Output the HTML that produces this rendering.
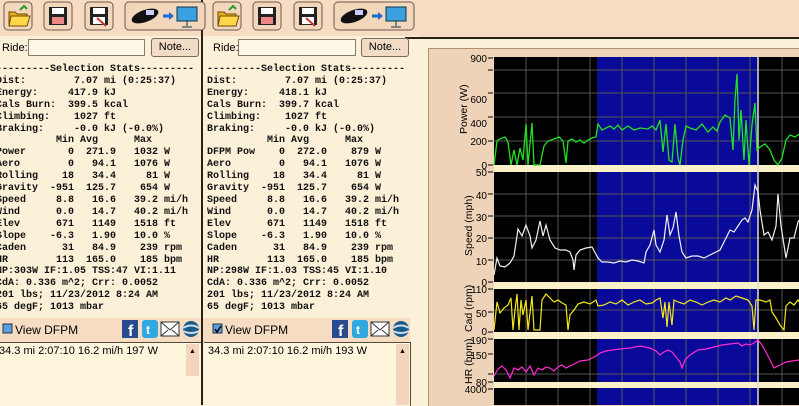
<!DOCTYPE html>
<html><head><meta charset="utf-8"><style>
body{margin:0;width:799px;height:405px;overflow:hidden;background:#fbf1d8;position:relative;font-family:"Liberation Sans",sans-serif}
.abs{position:absolute}
.tb{background:#f6dcc3}
.mono{font-family:"Liberation Mono",monospace;font-weight:bold;font-size:10px;line-height:11.9px;white-space:pre;color:#111}
.lbl{font-size:11px;color:#000}
</style></head><body>

<div class="abs tb" style="left:0;top:0;width:420px;height:36px"></div>
<div class="abs tb" style="left:420px;top:0;width:379px;height:37px"></div>
<div class="abs" style="left:405px;top:37px;width:394px;height:2px;background:#2a2018"></div>
<div class="abs" style="left:201px;top:0;width:2px;height:405px;background:#2a2018"></div>

<svg class="abs" style="left:0;top:0" width="420" height="36">
<g id="tb1">
 <rect x="4" y="2" width="28" height="28" rx="4" fill="#f3d7bc" stroke="#6d5a4a"/>
 <path d="M9 12h6l2 2h10v12H9z" fill="#e8b020" stroke="#6b4a00"/><path d="M11 16h19l-3 10H9z" fill="#ffd84a" stroke="#6b4a00"/><path d="M20 10l4-4 3 3" stroke="#2a9a2a" stroke-width="2" fill="none"/>
 <rect x="44" y="2" width="28" height="28" rx="4" fill="#f3d7bc" stroke="#6d5a4a"/>
 <rect x="49" y="7" width="18" height="18" fill="#222"/><rect x="52" y="8" width="12" height="6" fill="#fff"/><rect x="52" y="17" width="12" height="7" fill="#e88"/>
 <rect x="85" y="2" width="28" height="28" rx="4" fill="#f3d7bc" stroke="#6d5a4a"/>
 <rect x="90" y="7" width="18" height="18" fill="#222"/><rect x="93" y="8" width="12" height="6" fill="#fff"/><rect x="93" y="17" width="12" height="7" fill="#fff"/><path d="M97 18l9 8" stroke="#c33" stroke-width="2"/>
 <rect x="125" y="2" width="80" height="28" rx="4" fill="#f3d7bc" stroke="#6d5a4a"/>
 <ellipse cx="145" cy="16" rx="14" ry="6" fill="#111" transform="rotate(-20 145 16)"/><rect x="146" y="10" width="8" height="5" fill="#ccf"/>
 <path d="M163 16h7" stroke="#1a6ad0" stroke-width="3"/><path d="M169 12l5 4-5 4z" fill="#1a6ad0"/>
 <rect x="177" y="7" width="20" height="14" fill="#3aa0e0" stroke="#134"/><path d="M187 21v5M182 27h10" stroke="#134"/>
</g>
<use href="#tb1" x="209"/>
</svg>

<div class="abs lbl" style="left:2px;top:42px">Ride:</div>
<div class="abs" style="left:28px;top:39px;width:117px;height:17px;background:#fdf8e8;border:1px solid #8a7a6a;box-sizing:border-box"></div>
<div class="abs lbl" style="left:151px;top:38px;width:48px;height:19px;border:1px solid #7a6a5a;border-radius:3px;background:#f3dcc6;box-sizing:border-box;text-align:center;line-height:17px">Note...</div>
<div class="abs lbl" style="left:213px;top:42px">Ride:</div>
<div class="abs" style="left:238px;top:39px;width:118px;height:17px;background:#fdf8e8;border:1px solid #8a7a6a;box-sizing:border-box"></div>
<div class="abs lbl" style="left:361px;top:38px;width:48px;height:19px;border:1px solid #7a6a5a;border-radius:3px;background:#f3dcc6;box-sizing:border-box;text-align:center;line-height:17px">Note...</div>

<div class="abs mono" style="left:-4px;top:64px">---------Selection Stats---------
Dist:        7.07 mi (0:25:37)
Energy:     417.9 kJ
Cals Burn:  399.5 kcal
Climbing:    1027 ft
Braking:     -0.0 kJ (-0.0%)
          Min Avg      Max
Power       0  271.9   1032 W
Aero        0   94.1   1076 W
Rolling    18   34.4     81 W
Gravity  -951  125.7    654 W
Speed     8.8   16.6   39.2 mi/h
Wind      0.0   14.7   40.2 mi/h
Elev      671   1149   1518 ft
Slope    -6.3   1.90   10.0 %
Caden      31   84.9    239 rpm
HR        113  165.0    185 bpm
NP:303W IF:1.05 TSS:47 VI:1.11
CdA: 0.336 m^2; Crr: 0.0052
201 lbs; 11/23/2012 8:24 AM
65 degF; 1013 mbar</div>
<div class="abs mono" style="left:207px;top:64px">---------Selection Stats---------
Dist:        7.07 mi (0:25:37)
Energy:     418.1 kJ
Cals Burn:  399.7 kcal
Climbing:    1027 ft
Braking:     -0.0 kJ (-0.0%)
          Min Avg      Max
DFPM Pow    0  272.0    879 W
Aero        0   94.1   1076 W
Rolling    18   34.4     81 W
Gravity  -951  125.7    654 W
Speed     8.8   16.6   39.2 mi/h
Wind      0.0   14.7   40.2 mi/h
Elev      671   1149   1518 ft
Slope    -6.3   1.90   10.0 %
Caden      31   84.9    239 rpm
HR        113  165.0    185 bpm
NP:298W IF:1.03 TSS:45 VI:1.10
CdA: 0.336 m^2; Crr: 0.0052
201 lbs; 11/23/2012 8:24 AM
65 degF; 1013 mbar</div>

<div class="abs tb" style="left:0;top:318px;width:201px;height:24px"></div>
<div class="abs tb" style="left:203px;top:318px;width:207px;height:24px"></div>
<svg class="abs" style="left:0;top:318px" width="410" height="24">
<g id="soc">
 <rect x="3" y="6" width="9" height="9" fill="#5aa0e0" stroke="#234"/>
 <rect x="122" y="2" width="16" height="18" fill="#2a4a90"/><text x="128" y="18" font-family="Liberation Sans" font-weight="bold" font-size="16" fill="#fff">f</text>
 <rect x="142" y="2" width="16" height="18" rx="3" fill="#30a8e0"/><text x="146" y="16" font-family="Liberation Sans" font-weight="bold" font-size="12" fill="#fff">t</text>
 <rect x="161" y="4" width="18" height="14" fill="#fff" stroke="#333"/><path d="M161 4l9 8 9-8M161 18l7-6M179 18l-7-6" stroke="#333" fill="none"/>
 <circle cx="191" cy="11" r="8" fill="#1a5a8a"/><path d="M183 10q8-5 16 0M183 13q8 4 16 0" stroke="#cde" stroke-width="2" fill="none"/>
</g>
<use href="#soc" x="210"/>
<path d="M215 11l2 3 4-6" stroke="#000" stroke-width="1.5" fill="none"/>
</svg>
<div class="abs lbl" style="left:15px;top:323px;font-size:12px">View DFPM</div>
<div class="abs lbl" style="left:225px;top:323px;font-size:12px">View DFPM</div>

<div class="abs" style="left:0;top:342px;width:201px;height:63px;background:#fdf5dc;border-top:1px solid #5a4a3a"></div>
<div class="abs" style="left:204px;top:342px;width:206px;height:63px;background:#fdf5dc;border-top:1px solid #5a4a3a;border-right:1px solid #5a4a3a"></div>
<div class="abs" style="left:186px;top:344px;width:13px;height:32px;background:#f3d4bc"></div>
<div class="abs" style="left:396px;top:344px;width:13px;height:61px;background:#f3d4bc"></div>
<div class="abs lbl" style="left:-1px;top:345px">34.3 mi 2:07:10 16.2 mi/h 197 W</div>
<div class="abs lbl" style="left:208px;top:345px">34.3 mi 2:07:10 16.2 mi/h 193 W</div>
<div class="abs" style="left:189px;top:348px;font-size:7px">▲</div>
<div class="abs" style="left:399px;top:348px;font-size:7px">▲</div>

<div class="abs" style="left:428px;top:48px;width:371px;height:357px;background:#efd3b8;border-left:1px solid #b09070;border-top:1px solid #b09070"></div>
<svg class="abs" style="left:420px;top:0" width="379" height="405" font-family="Liberation Sans" font-size="11">
<rect x="74" y="57" width="305" height="348" fill="#fbf1c8"/>
<rect x="74" y="57" width="305" height="108" fill="#000"/>
<rect x="74" y="172" width="305" height="110" fill="#000"/>
<rect x="74" y="289" width="305" height="43" fill="#000"/>
<rect x="74" y="339" width="305" height="43" fill="#000"/>
<rect x="74" y="388" width="305" height="17" fill="#000"/>
<g fill="#0a0a9a">
 <rect x="177" y="57" width="161" height="108"/><rect x="177" y="172" width="161" height="110"/>
 <rect x="177" y="289" width="161" height="43"/><rect x="177" y="339" width="161" height="43"/><rect x="177" y="388" width="161" height="17"/>
</g>
<clipPath id="c"><rect x="74" y="57" width="305" height="108"/><rect x="74" y="172" width="305" height="110"/><rect x="74" y="289" width="305" height="43"/><rect x="74" y="339" width="305" height="43"/><rect x="74" y="388" width="305" height="17"/></clipPath>
<g clip-path="url(#c)" stroke="#555">
 <path d="M106 0v405M138 0v405M170 0v405M202 0v405M234 0v405M266 0v405M298 0v405M330 0v405M362 0v405"/>
 <path d="M74 70h305M74 93h305M74 117h305M74 141h305M74 194h305M74 216h305M74 238h305M74 260h305M74 310h305M74 374h305"/>
</g>
<path d="M338 57v348" stroke="#ddd" stroke-width="1.5"/>
<polyline fill="none" stroke="#22e022" stroke-width="1.3" points="74,165 77,141 80,139 85,137 88,142 91,165 94,150 97,165 100,148 103,160 106,124 108,165 112,123 114,165 120,165 124,146 128,141 134,139 139,137 143,141 146,163 148,141 152,139 156,142 160,140 164,143 168,140 172,138 176,137 178,124 182,130 186,128 190,126 194,129 198,125 202,130 208,126 214,130 220,128 228,129 232,126 236,130 240,120 243,152 246,124 249,160 252,162 255,124 258,158 260,165 263,140 266,126 270,128 276,130 282,124 288,132 293,127 297,131 300,122 305,115 310,118 313,150 315,100 317,74 319,140 321,110 324,160 326,120 329,165 332,125 335,103 337,150 340,147 345,144 350,150 354,160 358,165 362,158 366,140 370,135 375,137 379,134"/>
<polyline fill="none" stroke="#f0f0f0" stroke-width="1.2" points="74,275 77,258 80,266 85,267 90,263 94,256 98,229 102,236 106,225 110,236 112,248 116,240 120,221 123,236 126,225 130,240 135,248 140,250 146,250 150,252 153,260 154,270 156,255 160,250 166,248 172,247 178,258 182,262 188,262 194,263 200,261 206,262 212,260 218,261 224,263 226,252 230,245 234,230 236,245 240,252 244,240 247,215 250,235 253,228 256,212 259,236 262,252 266,258 272,256 278,256 284,258 290,255 296,252 300,250 306,238 310,230 314,232 318,226 322,220 325,218 328,222 332,210 335,185 338,192 340,210 344,235 348,232 352,240 356,226 358,194 361,226 364,245 366,258 370,238 374,238 378,222 379,220"/>
<polyline fill="none" stroke="#f4e81a" stroke-width="1.2" points="74,330 77,302 80,313 84,308 88,305 91,298 93,330 95,310 97,294 99,330 101,300 103,315 106,300 108,330 112,296 114,330 120,330 122,300 126,294 130,298 134,302 138,300 142,303 146,305 148,330 150,315 154,310 158,304 164,302 170,304 176,300 178,306 184,305 190,302 196,304 202,300 208,305 214,302 220,300 226,304 232,303 236,300 240,298 243,318 245,302 247,327 249,302 252,325 254,300 258,302 264,304 270,300 276,302 282,305 288,302 294,300 300,302 306,298 310,300 316,296 322,298 328,300 332,306 334,330 336,300 340,300 346,302 350,300 352,312 356,318 360,325 364,330 366,306 370,302 374,305 378,300 379,302"/>
<polyline fill="none" stroke="#ff2bd0" stroke-width="1.2" points="74,376 78,369 82,366 86,370 90,378 94,368 98,370 102,367 106,372 110,366 114,375 118,368 122,370 126,367 130,368 134,371 138,367 142,365 146,368 152,365 160,361 168,360 176,356 180,353 186,351 192,350 200,349 210,348 220,346 230,348 236,351 240,355 244,352 248,350 252,352 256,357 260,362 262,368 265,360 270,355 278,350 286,349 294,347 302,345 310,344 318,343 322,346 326,344 330,345 334,343 338,340 342,345 346,352 350,360 354,368 360,365 366,362 372,361 379,360"/>
<g font-size="10" text-anchor="end" fill="#000">
 <text x="67" y="62">900</text><text x="67" y="127">400</text><text x="67" y="103">600</text><text x="67" y="145">200</text><text x="67" y="169">0</text>
 <text x="67" y="176">50</text><text x="67" y="199">40</text><text x="67" y="221">30</text><text x="67" y="242">20</text><text x="67" y="265">10</text><text x="67" y="286">0</text>
 <text x="67" y="293">110</text><text x="67" y="317">50</text><text x="67" y="335">0</text>
 <text x="67" y="344">190</text><text x="67" y="359">150</text><text x="67" y="386">80</text><text x="67" y="393">4000</text>
</g>
<g stroke="#000"><path d="M68 58h5M68 70h5M68 93h5M68 117h5M68 141h5M68 165h5M68 172h5M68 194h5M68 216h5M68 238h5M68 260h5M68 282h5M68 289h5M68 312h5M68 332h5M68 339h5M68 354h5M68 374h5M68 382h5M68 389h5"/></g>
<g font-size="10.5" fill="#000">
 <text transform="translate(47 134) rotate(-90)">Power (W)</text>
 <text transform="translate(52 256) rotate(-90)">Speed (mph)</text>
 <text transform="translate(52 332) rotate(-90)">Cad (rpm)</text>
 <text transform="translate(52 384) rotate(-90)">HR (bpm)</text>
</g>
</svg>
</body></html>
